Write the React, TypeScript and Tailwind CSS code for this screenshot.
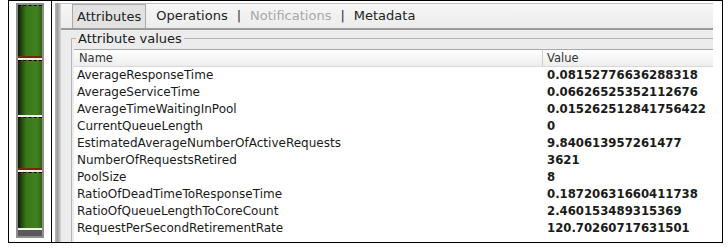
import React from "react";

const rows: [string, string][] = [
  ["AverageResponseTime", "0.08152776636288318"],
  ["AverageServiceTime", "0.06626525352112676"],
  ["AverageTimeWaitingInPool", "0.015262512841756422"],
  ["CurrentQueueLength", "0"],
  ["EstimatedAverageNumberOfActiveRequests", "9.840613957261477"],
  ["NumberOfRequestsRetired", "3621"],
  ["PoolSize", "8"],
  ["RatioOfDeadTimeToResponseTime", "0.18720631660411738"],
  ["RatioOfQueueLengthToCoreCount", "2.460153489315369"],
  ["RequestPerSecondRetirementRate", "120.70260717631501"],
];

function Segment({ h, sep }: { h: number; sep: "red" | "white" | "none" }) {
  return (
    <div className="flex flex-col">
      <div
        className="w-full border-t border-dashed border-t-black bg-[linear-gradient(90deg,#0b1a04_0%,#1f4a0c_15%,#3b7a1c_35%,#3f801f_80%,#2f6414_100%)]"
        style={{ height: h }}
      />
      {sep === "red" && (
        <>
          <div className="h-[2px] bg-[#7a2410]" />
          <div className="h-[2px] bg-[#f2eee0]" />
        </>
      )}
      {sep === "white" && <div className="h-[2px] bg-[#f2f2ea]" />}
    </div>
  );
}

export default function App() {
  return (
    <div
      className="w-[728px] h-[249px] bg-white overflow-hidden"
      style={{ fontFamily: '"DejaVu Sans", Verdana, sans-serif' }}
    >
      <div className="ml-[8px] w-[715px] h-[243px] border border-black flex">
        {/* left cell */}
        <div className="w-[43px] border-r border-black shrink-0">
          <div className="ml-[7px] mt-[2px] w-[28px] h-[235px] border-2 border-[#8e8e8e] bg-[#6a6a6a] flex flex-col">
            <Segment h={51} sep="red" />
            <Segment h={55} sep="white" />
            <Segment h={51} sep="red" />
            <Segment h={56} sep="white" />
            <div className="flex-1 bg-[#5a5a5a]" />
          </div>
        </div>
        {/* right cell */}
        <div className="flex-1 pl-[3px] pr-[9px] pt-[2px] flex">
          <div className="w-[6px] shrink-0 bg-[linear-gradient(90deg,#b8b8b8,#9c9c9c_40%,#d6d6d6)]" />
          <div className="flex-1 bg-[#ececec] flex flex-col overflow-hidden">
            {/* tab bar */}
            <div className="h-[25px] border-t border-[#c4c4c4] bg-[linear-gradient(180deg,#f6f6f6,#ececec)] flex items-end pl-[11px] text-[13px] text-[#222] shrink-0">
              <div className="h-[24px] border border-b-0 border-[#a9a9a9] bg-[#e2e2e2] px-[4px] flex items-center">
                Attributes
              </div>
              <div className="h-[24px] flex items-center pl-[10px]">Operations</div>
              <div className="h-[24px] flex items-center pl-[9px] text-[#333]">|</div>
              <div className="h-[24px] flex items-center pl-[9px] text-[#a8a8a8]">
                Notifications
              </div>
              <div className="h-[24px] flex items-center pl-[9px] text-[#333]">|</div>
              <div className="h-[24px] flex items-center pl-[9px]">Metadata</div>
            </div>
            <div className="h-[2px] bg-[#9a9a9a] shrink-0" />
            {/* group */}
            <div className="flex-1 pt-[8px] pl-[10px] flex flex-col">
              <div className="flex-1 relative border-l border-t border-[#b4b4b4] pt-[10px] pl-[2px] flex flex-col">
                <div className="absolute left-[4px] top-[-9px] h-[17px] bg-[#ececec] px-[2px] text-[13px] leading-[17px] text-[#1a1a1a]">
                  Attribute values
                </div>
                <div className="flex-1 bg-white border-t border-[#a8a8a8] flex flex-col text-[12px] text-[#1a1a1a]">
                  {/* header */}
                  <div className="h-[17px] flex bg-[linear-gradient(180deg,#ffffff,#ededed)] border-b border-[#d8d8d8] shrink-0">
                    <div className="w-[468px] pl-[5px] leading-[16px] text-[#333] text-[11.5px]">Name</div>
                    <div className="border-l border-[#d0d0d0] pl-[4px] leading-[16px] text-[#333] text-[11.5px]">
                      Value
                    </div>
                  </div>
                  {rows.map(([n, v]) => (
                    <div key={n} className="h-[17px] flex leading-[17px]">
                      <div className="w-[470px] pl-[3px]">{n}</div>
                      <div className="pl-[3px] font-bold text-[11.7px]">{v}</div>
                    </div>
                  ))}
                </div>
              </div>
            </div>
          </div>
        </div>
      </div>
    </div>
  );
}
